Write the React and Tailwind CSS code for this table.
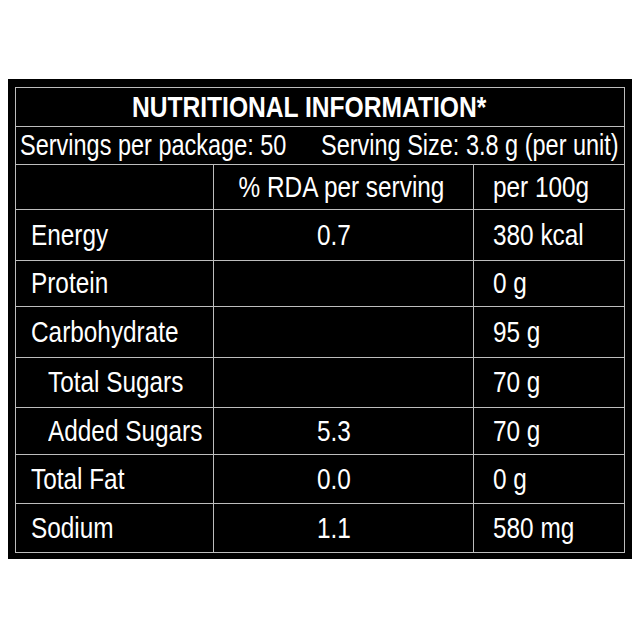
import React from 'react';

const rows = [
  { name: 'Energy', rda: '0.7', per100: '380 kcal', h: 'h-[51px]' },
  { name: 'Protein', rda: '', per100: '0 g', h: 'h-[46px]' },
  { name: 'Carbohydrate', rda: '', per100: '95 g', h: 'h-[51px]' },
  { name: 'Total Sugars', rda: '', per100: '70 g', h: 'h-[50px]', sub: true },
  { name: 'Added Sugars', rda: '5.3', per100: '70 g', h: 'h-[47px]', sub: true },
  { name: 'Total Fat', rda: '0.0', per100: '0 g', h: 'h-[49px]' },
  { name: 'Sodium', rda: '1.1', per100: '580 mg', h: 'h-[48px]', last: true },
];

// narrow look: Liberation Sans squeezed sideways (no Arial Narrow installed)
function N({ children, origin = 'origin-left' }) {
  return <span className={`inline-block whitespace-nowrap scale-x-[0.84] ${origin}`}>{children}</span>;
}

export default function App() {
  return (
    <div className="w-[640px] h-[640px] bg-white pt-[79px] pl-[8px]" style={{ fontFamily: '"Liberation Sans", Arial, sans-serif' }}>
      <div className="w-[624px] h-[480px] bg-black pt-[8px] pb-[7px] px-[7px]">
        <div className="border border-[#bdbdbd] text-white leading-none">
          {/* title */}
          <div className="h-[39px] border-b border-[#bdbdbd] flex items-center justify-center pr-[22px] text-[30px] font-bold">
            <span className="inline-block whitespace-nowrap scale-x-[0.82] origin-center">NUTRITIONAL INFORMATION*</span>
          </div>
          {/* servings */}
          <div className="h-[38px] border-b border-[#bdbdbd] flex items-center text-[29px] overflow-hidden">
            <div className="w-[305px] shrink-0 pl-[4px]">
              <span className="inline-block whitespace-nowrap scale-x-[0.81] origin-left">Servings per package: 50</span>
            </div>
            <div className="shrink-0">
              <span className="inline-block whitespace-nowrap scale-x-[0.81] origin-left">Serving Size: 3.8 g (per unit)</span>
            </div>
          </div>
          {/* header */}
          <div className="h-[45px] border-b border-[#bdbdbd] flex text-[29px]">
            <div className="w-[198px] border-r border-[#bdbdbd]" />
            <div className="w-[260px] border-r border-[#bdbdbd] flex items-center justify-center pr-[4px]">
              <N origin="origin-center">% RDA per serving</N>
            </div>
            <div className="flex-1 flex items-center pl-[19px]"><N>per 100g</N></div>
          </div>
          {rows.map((r) => (
            <div key={r.name} className={`${r.h} ${r.last ? '' : 'border-b border-[#bdbdbd]'} flex text-[29px]`}>
              <div className={`w-[198px] border-r border-[#bdbdbd] flex items-center ${r.sub ? 'pl-[32px]' : 'pl-[15px]'}`}>
                <N>{r.name}</N>
              </div>
              <div className="w-[260px] border-r border-[#bdbdbd] flex items-center pl-[103px]"><N>{r.rda}</N></div>
              <div className="flex-1 flex items-center pl-[19px]"><N>{r.per100}</N></div>
            </div>
          ))}
        </div>
      </div>
    </div>
  );
}
